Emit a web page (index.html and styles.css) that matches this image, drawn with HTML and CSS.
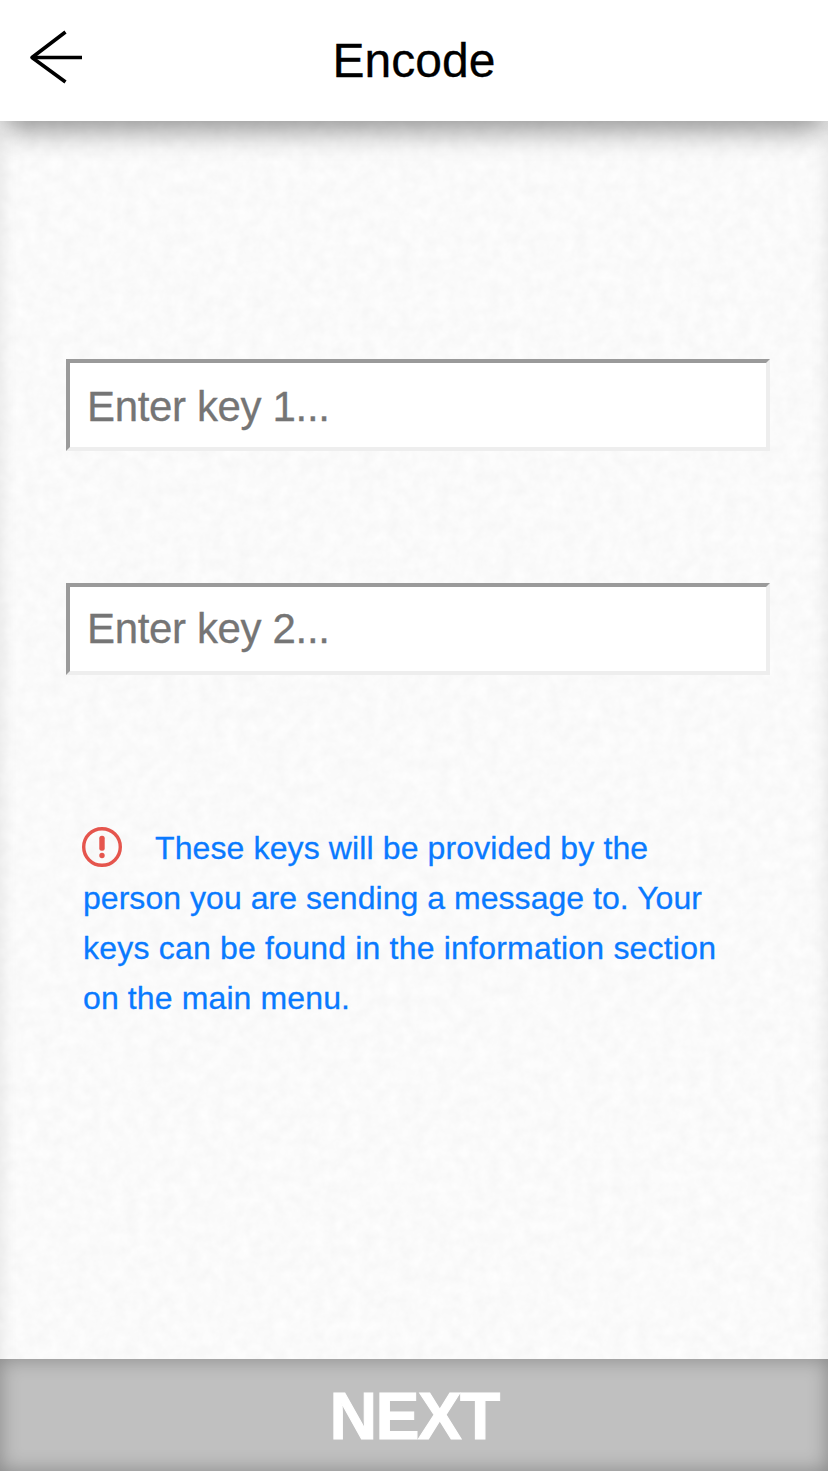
FILE: index.html
```html
<!DOCTYPE html>
<html lang="en">
<head>
<meta charset="utf-8">
<title>Encode</title>
<link rel="stylesheet" href="styles.css">
</head>
<body>
<div class="screen">
  <header class="header">
    <a class="back" aria-label="Back">
      <svg width="54" height="54" viewBox="0 0 54 54" fill="none" stroke="#000" stroke-width="3.6" stroke-linejoin="round">
        <path d="M36.500 2 3 27.500 36.500 52"/>
        <path d="M3 27.500H53" stroke-width="3.4"/>
      </svg>
    </a>
    <h1 class="title">Encode</h1>
    <span></span>
  </header>
  <main class="content">
    <svg class="paper" aria-hidden="true">
      <filter id="grain" x="0" y="0" width="100%" height="100%" color-interpolation-filters="sRGB">
        <feTurbulence type="fractalNoise" baseFrequency="0.08" numOctaves="3" seed="4"/>
        <feColorMatrix values="0.036 0 0 0 0.963  0.036 0 0 0 0.963  0.036 0 0 0 0.963  0 0 0 0 1"/>
      </filter>
      <rect width="100%" height="100%" filter="url(#grain)"/>
    </svg>
    <form class="form">
      <input class="key key-first" type="text" placeholder="Enter key 1...">
      <input class="key" type="text" placeholder="Enter key 2...">
      <p class="note"><svg class="alert" width="40" height="40" viewBox="0 0 40 40" aria-hidden="true">
        <circle cx="20" cy="20" r="18.3" fill="none" stroke="#e5554d" stroke-width="3.4"/>
        <rect x="17.3" y="8.8" width="5.4" height="15" rx="2.5" fill="#e5554d"/>
        <circle cx="20" cy="28.5" r="2.7" fill="#e5554d"/>
      </svg>These keys will be provided by the<br><span class="tight">person you are sending a message to. Your</span><br><span class="wide">keys can be found in the information section</span><br>on the main menu.</p>
    </form>
  </main>
  <button class="next">NEXT</button>
</div>
</body>
</html>
```
FILE: styles.css
```css
* {
  box-sizing: border-box;
}

body {
  margin: 0;
  font-family: "Liberation Sans", Arial, sans-serif;
}

.screen {
  display: flex;
  flex-direction: column;
  height: 1471px;
  overflow: hidden;
}

.header {
  position: relative;
  z-index: 2;
  display: grid;
  grid-template-columns: 1fr auto 1fr;
  align-items: center;
  flex: 0 0 121px;
  padding: 0 29px;
  background: #fff;
  box-shadow: 0 20px 24px -7px rgba(0, 0, 0, 0.32);
}

.back {
  display: flex;
  padding-bottom: 8px;
}

.title {
  margin: 0;
  font-size: 48px;
  font-weight: 400;
  line-height: 56px;
  -webkit-text-stroke: 0.3px;
}

.content {
  position: relative;
  flex: 1;
  padding: 238px 58px 0 66px;
}

.content::after {
  content: "";
  position: absolute;
  inset: 0 0 -30px;
  box-shadow: inset 0 0 18px rgba(0, 0, 0, 0.1);
  pointer-events: none;
}

.paper {
  position: absolute;
  inset: 0;
  width: 100%;
  height: 100%;
}

.form {
  position: relative;
  display: flex;
  flex-direction: column;
}

.key {
  height: 92px;
  margin-bottom: 132px;
  padding: 0 16px 0 17px;
  border: 4px solid;
  border-color: #9a9a9a #eee #eee #9a9a9a;
  border-radius: 0;
  background: #fff;
  font: 42px "Liberation Sans", Arial, sans-serif;
  letter-spacing: -0.35px;
}

.key-first {
  padding-top: 3px;
}

.key::placeholder {
  color: #757575;
  -webkit-text-stroke: 0.3px;
}

.note {
  margin: 16px 0 0 17px;
  color: #0a7aff;
  font-size: 32px;
  letter-spacing: 0.12px;
  line-height: 50px;
  white-space: nowrap;
  -webkit-text-stroke: 0.3px;
}

.tight {
  letter-spacing: 0.04px;
}

.wide {
  letter-spacing: 0.2px;
}

.alert {
  margin: 0 33px 0 -1px;
  vertical-align: -8px;
}

.next {
  position: relative;
  z-index: 1;
  flex: 0 0 112px;
  padding: 2px 0 0;
  border: 0;
  background: #c0c0c0;
  box-shadow: inset 0 0 20px rgba(0, 0, 0, 0.3);
  color: #fff;
  font: bold 66px "Liberation Sans", Arial, sans-serif;
  letter-spacing: -1.8px;
  -webkit-text-stroke: 1px #fff;
}
```
